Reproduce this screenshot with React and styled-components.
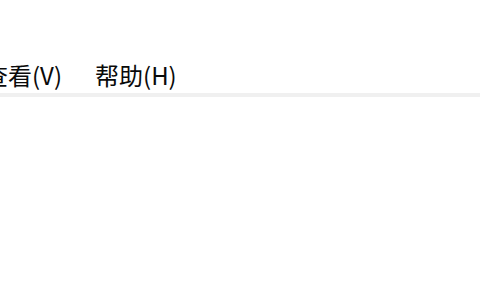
import React from "react";
import styled, { createGlobalStyle } from "styled-components";

const GlobalStyle = createGlobalStyle`
  html, body {
    margin: 0;
    padding: 0;
    background: #ffffff;
  }
  body {
    width: 480px;
    height: 300px;
    overflow: hidden;
    font-family: "Noto Sans CJK SC", "Liberation Sans", sans-serif;
  }
`;

const Window = styled.div`
  width: 480px;
  height: 300px;
  background: #ffffff;
  overflow: hidden;
  padding-top: 56px;
  box-sizing: border-box;
`;

const MenuBar = styled.div`
  display: flex;
  align-items: center;
  height: 37px;
  margin-left: -16px;
  gap: 33px;
  border-bottom: 4px solid #f0f0f0;
`;

const MenuItem = styled.span`
  font-size: 24px;
  color: #0a0a0a;
  white-space: nowrap;
  line-height: 1;
`;

const Body = styled.div`
  flex: 1;
`;

const menus = ["查看(V)", "帮助(H)"];

const App = () => {
  return (
    <>
      <GlobalStyle />
      <Window>
        <MenuBar>
          {menus.map((m) => (
            <MenuItem key={m}>{m}</MenuItem>
          ))}
        </MenuBar>
        <Body />
      </Window>
    </>
  );
};

export default App;
